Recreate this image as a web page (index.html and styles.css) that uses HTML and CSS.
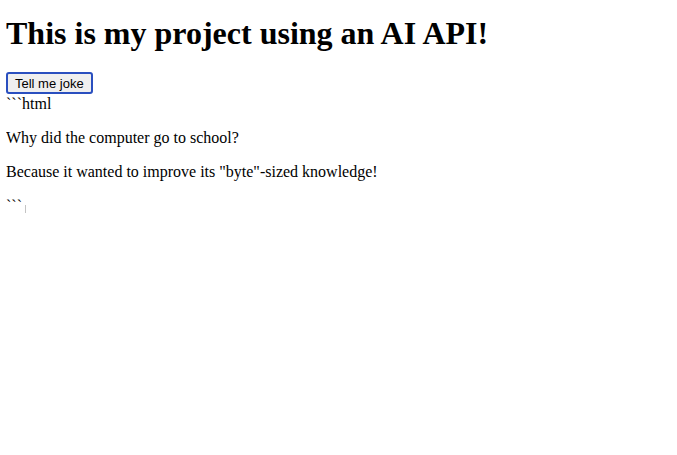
FILE: index.html
```html
<!DOCTYPE html>
<html>
<head>
<meta charset="utf-8">
<link rel="stylesheet" href="styles.css">
</head>
<body class="page">
<h1 class="title">This is my project using an AI API!</h1>
<button class="joke-btn">Tell me joke</button>
<div class="joke">```html
<p class="line">Why did the computer go to school?</p>
<p class="line">Because it wanted to improve its "byte"-sized knowledge!</p>
```<span class="caret"></span></div>
</body>
</html>
```
FILE: styles.css
```css
.page {
  margin: 6px;
  font-family: "Liberation Serif", serif;
  font-size: 16px;
  color: #000;
  background: #fff;
}
.title {
  font-size: 32px;
  font-weight: bold;
  margin: 9px 0 20px;
}
.joke-btn {
  font-family: "Liberation Sans", Arial, sans-serif;
  font-size: 13px;
  padding: 2px 7px 1px;
  border: 2px solid #2a4fbf;
  border-radius: 3px;
  background: #efefef;
  color: #000;
}
.joke {
  padding-top: 1px;
}
.line {
  margin: 16px 0;
}
.caret {
  display: inline-block;
  width: 1px;
  height: 8px;
  background: #c4c4c4;
  margin-left: 3px;
  vertical-align: -2px;
}
```
